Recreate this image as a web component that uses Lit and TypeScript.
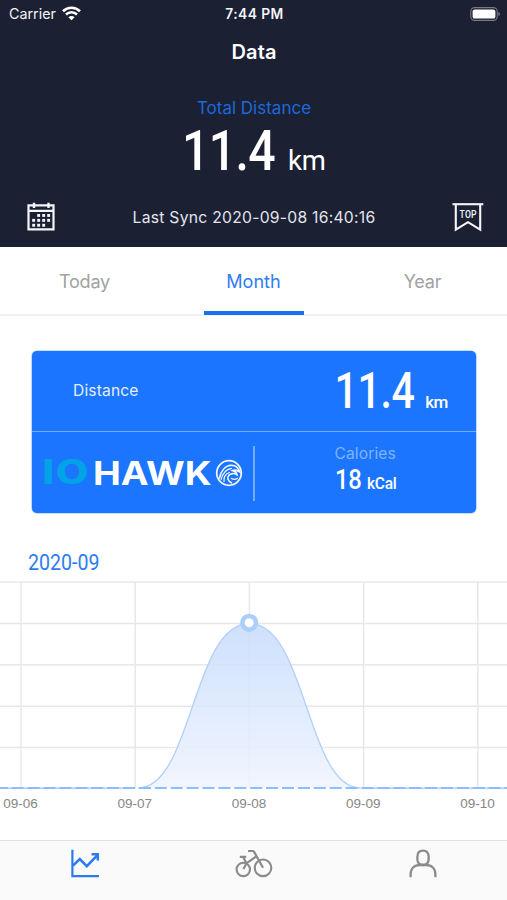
import { LitElement, html, svg, css } from "lit";
import { customElement, property, state } from "lit/decorators.js";
import { classMap } from "lit/directives/class-map.js";

@customElement("status-bar")
class StatusBar extends LitElement {
  static styles = css`
    :host { display: grid; grid-template-columns: 1fr auto 1fr; align-items: center; height: 27px; padding: 0 7px 0 9px; color: #f3f4f8; font-size: 14.3px; }
    .carrier { display: flex; align-items: center; gap: 6px; }
    .time { font-weight: 600; font-size: 13.8px; letter-spacing: .45px; }
    .battery { justify-self: end; display: block; }
    svg { display: block; }
  `;
  render() {
    return html`
      <div class="carrier"><span>Carrier</span>
        <svg width="19" height="15" viewBox="0 0 19 15" fill="none" stroke="#fff" stroke-width="2.6">
          <path d="M1 5.2a12.2 12.2 0 0 1 17 0M4 8.5a7.8 7.8 0 0 1 11 0"/>
          <path d="M9.5 14.3 6.4 11.2a4.4 4.4 0 0 1 6.2 0Z" fill="#fff" stroke="none"/>
        </svg>
      </div>
      <span class="time">7:44 PM</span>
      <svg class="battery" width="30" height="14" viewBox="0 0 30 14">
        <rect x=".8" y=".6" width="26.4" height="12.8" rx="3.8" fill="none" stroke="#777984" stroke-width="1.1"/>
        <rect x="2.6" y="2.4" width="22.8" height="9.2" rx="2.2" fill="#fff"/>
        <path d="M28.4 4.9q1.6.6 1.6 2.1t-1.6 2.1Z" fill="#777984"/>
      </svg>`;
  }
}

@customElement("distance-header")
class DistanceHeader extends LitElement {
  static styles = css`
    :host { display: block; height: 247px; background: #1c2033; color: #fff; }
    .title { height: 50px; display: grid; place-items: center; font-size: 20px; font-weight: 600; letter-spacing: .1px; padding-left: 1px; }
    .label { height: 62px; line-height: 62px; text-align: center; color: #1b69dd; font-size: 17px; letter-spacing: 0; padding-left: 1px; }
    .total { display: flex; justify-content: center; align-items: baseline; height: 58px; margin-top: -17px; line-height: 58px; font-family: Roboto, sans-serif; font-weight: 500; gap: 13px; }
    .num { font-size: 56px; letter-spacing: -.8px; transform: scaleX(.86); transform-origin: right; margin-left: -14px; }
    .unit { font-size: 27.5px; font-weight: 400; letter-spacing: 0; }
    .sync { display: flex; align-items: center; justify-content: space-between; height: 34px; padding: 0 23px 0 26px; margin-top: 20px; font-size: 15.7px; letter-spacing: .26px; color: #e3e5ee; }
    svg { display: block; }
    .top { font: 500 10.4px Roboto, sans-serif; }
  `;
  render() {
    const dots = [[1, 0], [2, 0], [3, 0], [0, 1], [1, 1], [2, 1], [3, 1], [0, 2], [1, 2], [2, 2]];
    return html`
      <status-bar></status-bar>
      <div class="title">Data</div>
      <div class="label">Total Distance</div>
      <div class="total"><span class="num">11.4</span><span class="unit">km</span></div>
      <div class="sync">
        <svg width="30" height="30" viewBox="0 0 30 30" fill="none" stroke="#f5f6fb" stroke-width="2.2">
          <path d="M2.5 3.4H27.5V27.4H2.5ZM2.5 8.8H27.5"/><path d="M8 .8V6M22.5 .8V6" stroke-width="2.4"/>
          ${dots.map(([c, r]) => svg`<rect x=${6.2 + c * 5} y=${12 + r * 4.9} width="2.9" height="2.9" fill="#f5f6fb" stroke="none"/>`)}
        </svg>
        <span>Last Sync 2020-09-08 16:40:16</span>
        <svg width="32" height="30" viewBox="0 0 32 30" fill="none" stroke="#f5f6fb" stroke-width="2.1">
          <path d="M.5 2.2H31.3"/><path d="M3.8 2.2V27.6L16 20.2 28.2 27.6V2.2"/>
          <text class="top" x="7.6" y="16.2" textLength="17.2" lengthAdjust="spacingAndGlyphs" fill="#f5f6fb" stroke="none">TOP</text>
        </svg>
      </div>`;
  }
}

@customElement("period-tabs")
class PeriodTabs extends LitElement {
  @state() private selected = "Month";
  static styles = css`
    :host { display: grid; grid-template-columns: repeat(3, 1fr); height: 67px; border-bottom: 2px solid #f0f2f4; margin-bottom: 1px; }
    .tab { display: grid; place-items: center; position: relative; font-size: 18.1px; letter-spacing: -.25px; color: #a2a2a2; cursor: pointer; }
    .active { color: #2f7df2; letter-spacing: 0; }
    .active::after { content: ""; position: absolute; left: 50%; bottom: -1px; width: 100px; margin-left: -50px; height: 4px; background: #1a70ee; }
  `;
  render() {
    return ["Today", "Month", "Year"].map(t => html`
      <div class=${classMap({ tab: true, active: t === this.selected })} @click=${() => (this.selected = t)}>${t}</div>`);
  }
}

@customElement("brand-logo")
class BrandLogo extends LitElement {
  static styles = css`
    :host { display: flex; align-items: center; gap: 4px; height: 34px; }
    svg { display: block; }
    .word { font-size: 33px; line-height: 34px; white-space: nowrap; }
    .word span { display: inline-block; transform-origin: left; }
    .io { width: 48px; color: #00a3e6; font-family: "DejaVu Sans", sans-serif; font-weight: 700; }
    .io span { transform: scaleX(1.18); }
    .hawk { width: 118px; color: #fff; font-family: Inter, sans-serif; font-weight: 650; }
    .hawk span { transform: scaleX(1.13); }
  `;
  render() {
    return html`
      <div class="word io"><span>IO</span></div>
      <div class="word hawk"><span>HAWK</span></div>
      <svg width="28" height="28" viewBox="0 0 28 28" fill="none" stroke="#f4f8ff" stroke-linecap="round">
        <circle cx="14" cy="14" r="12.3" stroke-width="1.7"/>
        <path d="M4.5 19C6 11.5 10.5 6.6 16 6.2c4-.2 7.2 2 8.6 6.6-2.6-1.8-4.8-2.2-7-1.2 2.4.6 4 2 4.4 4.2-2.8-2-6.4-1.4-8.2.6-2 2.4-1 5.6 2.6 7.4" stroke-width="1.6"/>
        <path d="M6.2 20.5C7.5 14 11 10.3 16.5 9.3M9 22.5c-.5-4.6 1.6-7.6 5.4-9M16.5 19.5c2 1.2 4 1.2 6-.2" stroke-width="1.2"/>
      </svg>`;
  }
}

@customElement("stats-card")
class StatsCard extends LitElement {
  static styles = css`
    :host { display: flex; flex-direction: column; height: 162px; margin: 34px 31px 0 32px; border-radius: 5px; background: #1b75ff; color: #fff; box-shadow: 0 0 0 .6px #8bbcff; }
    .upper { display: flex; justify-content: space-between; height: 81px; box-sizing: border-box; border-bottom: 1px solid #72abff; padding: 0 28px 0 41px; }
    .label { line-height: 79px; font-size: 15.6px; letter-spacing: .15px; color: #e3eeff; }
    .value { display: flex; align-items: baseline; gap: 11px; line-height: 80px; font-family: Roboto, sans-serif; font-weight: 500; }
    .num { font-size: 49.5px; letter-spacing: -.4px; transform: scaleX(.83); transform-origin: right; }
    .unit { font-size: 17px; letter-spacing: -.4px; }
    .lower { display: flex; flex: 1; }
    .logo { width: 221px; box-sizing: border-box; padding: 24px 0 0 9px; }
    .rule { width: 1.5px; height: 55px; margin-top: 14px; background: #72abff; }
    .cal { padding-left: 80px; padding-top: 12px; }
    .cal-label { font-size: 15.6px; line-height: 20px; letter-spacing: .1px; color: #80b3ff; }
    .cal-value { display: flex; align-items: baseline; gap: 1px; line-height: 32px; font-family: Roboto, sans-serif; font-weight: 500; }
    .cal-num { font-size: 28px; letter-spacing: -.2px; transform: scaleX(.85); transform-origin: left; }
    .cal-unit { font-size: 16.5px; letter-spacing: -.3px; transform: scaleX(.94); transform-origin: left; }
  `;
  render() {
    return html`
      <div class="upper"><span class="label">Distance</span>
        <div class="value"><span class="num">11.4</span><span class="unit">km</span></div></div>
      <div class="lower">
        <div class="logo"><brand-logo></brand-logo></div>
        <div class="rule"></div>
        <div class="cal"><div class="cal-label">Calories</div>
          <div class="cal-value"><span class="cal-num">18</span><span class="cal-unit">kCal</span></div></div>
      </div>`;
  }
}

@customElement("distance-chart")
class DistanceChart extends LitElement {
  @property({ type: Array }) days = ["09-06", "09-07", "09-08", "09-09", "09-10"];
  static styles = css`
    :host { display: block; margin-top: 36px; }
    .month { height: 28px; padding-left: 28px; font: 400 21.5px/28px Roboto, sans-serif; color: #2e7cef; }
    .month span { display: inline-block; transform: scaleX(.91); transform-origin: left; }
    svg { display: block; }
    .day { font: 13.5px "Liberation Sans", sans-serif; fill: #868686; text-anchor: middle; }
  `;
  render() {
    const x = (i: number) => 21 + i * 114.2;
    const base = 211, peak = 46.5, mid = 57;
    const curve = `M${x(1) + 3} ${base}C${x(1) + mid} ${base} ${x(2) - mid} ${peak} ${x(2)} ${peak}S${x(3) - mid} ${base} ${x(3) - 3} ${base}`;
    return html`
      <div class="month"><span>2020-09</span></div>
      <svg width="507" height="240" viewBox="0 0 507 240">
        <defs><linearGradient id="fade" x1="0" y1="0" x2="0" y2="1">
          <stop offset="0" stop-color="#c6dbfc"/><stop offset="1" stop-color="#eff4fe"/></linearGradient></defs>
        <g stroke="#e7e8e9" stroke-width="1.5">
          ${[0, 1, 2, 3, 4].map(i => svg`<path d="M0 ${5 + i * 41.4}H507"/>`)}
          ${this.days.map((_, i) => svg`<path d="M${x(i)} 5V211"/>`)}
        </g>
        <path d="${curve}Z" fill="url(#fade)" fill-opacity=".85"/>
        <path d="M0 ${base + .3}H${x(1)}M${x(3)} ${base + .3}H507" stroke="#a9ceff" stroke-width="1.5"/>
        <path d=${curve} fill="none" stroke="#b2cffb" stroke-width="1.3"/>
        <path d="M0 ${base}H507" stroke="#87c0fa" stroke-width="2.2" stroke-dasharray="12 3.9" stroke-dashoffset="4.2"/>
        <circle cx="249.2" cy="45.8" r="6.8" fill="#fff" stroke="#adcdfd" stroke-width="4.6"/>
        ${this.days.map((d, i) => svg`<text class="day" x=${x(i) - .4} y="231">${d}</text>`)}
      </svg>`;
  }
}

@customElement("bottom-nav")
class BottomNav extends LitElement {
  static styles = css`
    :host { display: grid; grid-template-columns: repeat(3, 1fr); height: 60px; box-sizing: border-box; margin-top: auto; border-top: 1px solid #e0e0e1; background: #fafafa; }
    .item { display: flex; justify-content: center; padding-top: 7px; }
    svg { display: block; }
  `;
  render() {
    return html`
      <div class="item"><svg width="38" height="32" viewBox="0 0 38 32" fill="none" stroke="#2c7af0" stroke-width="2.2">
        <path d="M6.4 1.8V28.2H33"/><path d="M7 17.6 13.8 11.1 20.8 18.2 31 7.6" stroke-width="2.5"/><path d="M25.6 6.3H31.8V12.5" stroke-width="2.5"/></svg></div>
      <div class="item"><svg width="38" height="32" viewBox="0 0 38 32" fill="none" stroke="#8b8b8b" stroke-width="2.1">
        <circle cx="8.3" cy="21.4" r="6.7"/><circle cx="28" cy="19.8" r="8.3"/>
        <path d="M13 3H17.6Q18.6 3 19.1 3.9L28 19.8M4.8 8.8H11.2M8 8.8 11.3 15.3M8.5 21 11.6 15.2 21.2 8.4" stroke-width="2.2"/></svg></div>
      <div class="item"><svg width="38" height="32" viewBox="0 0 38 32" fill="none" stroke="#8b8b8b" stroke-width="2.3">
        <path d="M19 2.6c-3.8 0-5.6 2.4-5.6 5.9v2.7c0 3.4 2 5.8 5.6 5.8s5.6-2.4 5.6-5.8V8.5c0-3.5-1.8-5.9-5.6-5.9Z"/>
        <path d="M6.6 29.2V26.5C6.6 20.5 10.4 17 16 17H22c5.6 0 9.4 3.5 9.4 9.5V29.2"/></svg></div>`;
  }
}

@customElement("app-root")
class AppRoot extends LitElement {
  static styles = css`
    :host { display: flex; flex-direction: column; width: 507px; height: 900px; overflow: hidden; background: #fff; font-family: Inter, "Liberation Sans", sans-serif; }
  `;
  render() {
    return html`<distance-header></distance-header><period-tabs></period-tabs><stats-card></stats-card><distance-chart></distance-chart><bottom-nav></bottom-nav>`;
  }
}
